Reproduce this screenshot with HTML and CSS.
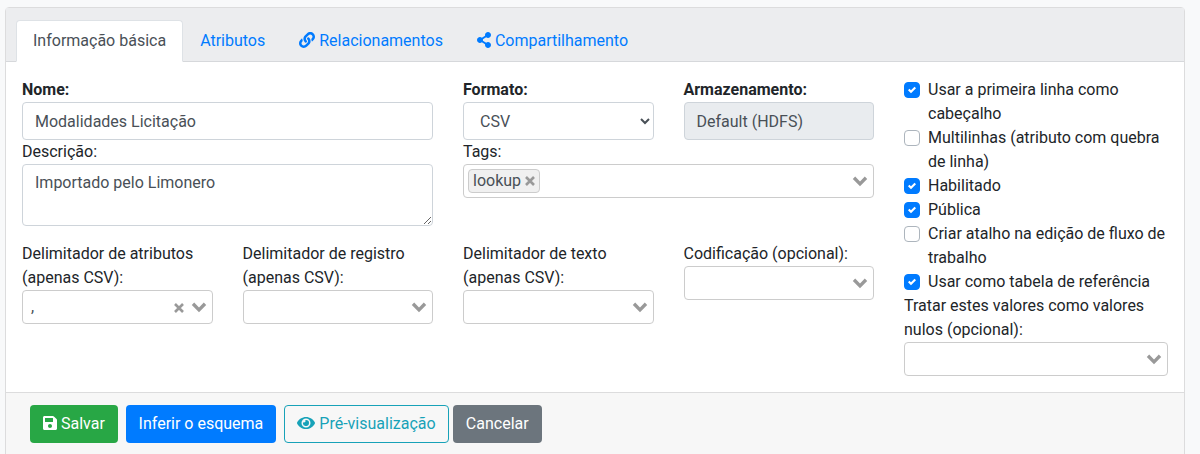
FILE: index.html
```html
<!DOCTYPE html>
<html lang="pt">
<head>
<meta charset="utf-8">
<title>Fonte de dados</title>
<link rel="stylesheet" href="styles.css">
</head>
<body>
<svg class="defs" width="0" height="0" aria-hidden="true">
  <symbol id="chev" viewBox="0 0 20 20"><polygon fill="currentColor" points="2.8,8 5.2,5.6 10,10.4 14.8,5.6 17.2,8 10,15.2"/></symbol>
  <symbol id="times" viewBox="0 0 10 10"><path d="M1 1 9 9M9 1 1 9" fill="none" stroke="currentColor" stroke-width="2.6"/></symbol>
  <symbol id="check" viewBox="0 0 8 8"><path fill="#fff" d="M6.564.75l-3.59 3.612-1.538-1.55L0 4.26l2.974 2.99L8 2.193z"/></symbol>
</svg>
<form class="card">
  <div class="card-header">
    <ul class="tabs">
      <li class="tab active">Informação básica</li>
      <li class="tab">Atributos</li>
      <li class="tab"><svg class="ico" viewBox="0 0 512 512"><path fill="currentColor" d="M326.612 185.391c59.747 59.809 58.927 155.698.36 214.59-.11.12-.24.25-.36.37l-67.2 67.2c-59.27 59.27-155.699 59.262-214.96 0-59.27-59.26-59.27-155.7 0-214.96l37.106-37.106c9.84-9.84 26.786-3.3 27.294 10.606.648 17.722 3.826 35.527 9.69 52.721 1.986 5.822.567 12.262-3.783 16.612l-13.087 13.087c-28.026 28.026-28.905 73.66-1.155 101.96 28.024 28.579 74.086 28.749 102.325.51l67.2-67.19c28.191-28.191 28.073-73.757 0-101.83-3.701-3.694-7.429-6.564-10.341-8.569a16.037 16.037 0 0 1-6.947-12.606c-.396-10.567 3.348-21.456 11.698-29.806l21.054-21.055c5.521-5.521 14.182-6.199 20.584-1.731a152.482 152.482 0 0 1 20.522 17.197zM467.547 44.449c-59.261-59.262-155.69-59.27-214.96 0l-67.2 67.2c-.12.12-.25.25-.36.37-58.566 58.892-59.387 154.781.36 214.59a152.454 152.454 0 0 0 20.521 17.196c6.402 4.468 15.064 3.789 20.584-1.731l21.054-21.055c8.35-8.35 12.094-19.239 11.698-29.806a16.037 16.037 0 0 0-6.947-12.606c-2.912-2.005-6.64-4.875-10.341-8.569-28.073-28.073-28.191-73.639 0-101.83l67.2-67.19c28.239-28.239 74.3-28.069 102.325.51 27.75 28.3 26.872 73.934-1.155 101.96l-13.087 13.087c-4.35 4.35-5.769 10.79-3.783 16.612 5.864 17.194 9.042 34.999 9.69 52.721.509 13.906 17.454 20.446 27.294 10.606l37.106-37.106c59.271-59.259 59.271-155.699.001-214.959z"/></svg> Relacionamentos</li>
      <li class="tab"><svg class="ico ico-share" viewBox="0 0 448 512"><path fill="currentColor" d="M352 320c-22.608 0-43.387 7.819-59.79 20.895l-102.486-64.054a96.551 96.551 0 0 0 0-41.683l102.486-64.054C308.613 184.181 329.392 192 352 192c53.019 0 96-42.981 96-96S405.019 0 352 0s-96 42.981-96 96c0 7.158.79 14.13 2.276 20.841L155.79 180.895C139.387 167.819 118.608 160 96 160c-53.019 0-96 42.981-96 96s42.981 96 96 96c22.608 0 43.387-7.819 59.79-20.895l102.486 64.054A96.301 96.301 0 0 0 256 416c0 53.019 42.981 96 96 96s96-42.981 96-96-42.981-96-96-96z"/></svg> Compartilhamento</li>
    </ul>
  </div>

  <div class="card-body">
    <div class="main-fields">
      <div class="field half">
        <label class="bold">Nome:</label>
        <input class="control" type="text" value="Modalidades Licitação">
      </div>
      <div class="field">
        <label class="bold">Formato:</label>
        <select class="control select-native"><option>CSV</option></select>
      </div>
      <div class="field">
        <label class="bold">Armazenamento:</label>
        <input class="control" type="text" value="Default (HDFS)" disabled>
      </div>
      <div class="field half">
        <label>Descrição:</label>
        <textarea class="control area">Importado pelo Limonero</textarea>
      </div>
      <div class="field half">
        <label>Tags:</label>
        <div class="multi tags">
          <span class="tag">lookup<svg class="tag-x"><use href="#times"/></svg></span>
          <svg class="chev"><use href="#chev"/></svg>
        </div>
      </div>
      <div class="field delim">
        <label>Delimitador de atributos (apenas CSV):</label>
        <div class="multi">
          <span class="single">,</span>
          <svg class="clear"><use href="#times"/></svg>
          <svg class="chev"><use href="#chev"/></svg>
        </div>
      </div>
      <div class="field delim">
        <label>Delimitador de registro (apenas CSV):</label>
        <div class="multi"><svg class="chev"><use href="#chev"/></svg></div>
      </div>
      <div class="field delim">
        <label>Delimitador de texto (apenas CSV):</label>
        <div class="multi"><svg class="chev"><use href="#chev"/></svg></div>
      </div>
      <div class="field delim">
        <label>Codificação (opcional):</label>
        <div class="multi"><svg class="chev"><use href="#chev"/></svg></div>
      </div>
    </div>

    <div class="side">
      <div class="check"><span class="box on"><svg viewBox="0 0 8 8"><use href="#check"/></svg></span>Usar a primeira linha como cabeçalho</div>
      <div class="check"><span class="box"></span>Multilinhas (atributo com quebra de linha)</div>
      <div class="check"><span class="box on"><svg viewBox="0 0 8 8"><use href="#check"/></svg></span>Habilitado</div>
      <div class="check"><span class="box on"><svg viewBox="0 0 8 8"><use href="#check"/></svg></span>Pública</div>
      <div class="check"><span class="box"></span>Criar atalho na edição de fluxo de trabalho</div>
      <div class="check"><span class="box on"><svg viewBox="0 0 8 8"><use href="#check"/></svg></span>Usar como tabela de referência</div>
      <label>Tratar estes valores como valores nulos (opcional):</label>
      <div class="multi"><svg class="chev"><use href="#chev"/></svg></div>
    </div>
  </div>

  <div class="card-footer">
    <button type="button" class="btn green"><svg class="ico ico-save" viewBox="0 0 448 512"><path fill="currentColor" d="M433.941 129.941l-83.882-83.882A48 48 0 0 0 316.118 32H48C21.49 32 0 53.49 0 80v352c0 26.51 21.49 48 48 48h352c26.51 0 48-21.49 48-48V163.882a48 48 0 0 0-14.059-33.941zM224 416c-35.346 0-64-28.654-64-64 0-35.346 28.654-64 64-64s64 28.654 64 64c0 35.346-28.654 64-64 64zm96-304.52V212c0 6.627-5.373 12-12 12H76c-6.627 0-12-5.373-12-12V108c0-6.627 5.373-12 12-12h228.52c3.183 0 6.235 1.264 8.485 3.515l3.48 3.48A11.996 11.996 0 0 1 320 111.48z"/></svg> Salvar</button>
    <button type="button" class="btn blue">Inferir o esquema</button>
    <button type="button" class="btn outline"><svg class="ico ico-eye" viewBox="0 0 576 512"><path fill="currentColor" d="M572.52 241.4C518.29 135.59 410.93 64 288 64S57.68 135.64 3.48 241.41a32.35 32.35 0 0 0 0 29.19C57.71 376.41 165.07 448 288 448s230.32-71.64 284.52-177.41a32.35 32.35 0 0 0 0-29.19zM288 400a144 144 0 1 1 144-144 143.93 143.93 0 0 1-144 144zm0-240a95.31 95.31 0 0 0-25.31 3.79 47.85 47.85 0 0 1-66.9 66.9A95.78 95.78 0 1 0 288 160z"/></svg> Pré-visualização</button>
    <button type="button" class="btn gray">Cancelar</button>
  </div>
</form>
</body>
</html>
```

FILE: styles.css
```css
* { box-sizing: border-box; }

html, body { height: 100%; overflow: hidden; }

body {
  margin: 0;
  padding: 7px 15px 0 5px;
  background: #f8f9fa;
  color: #212529;
  font: 400 16px/24px Roboto, "Liberation Sans", sans-serif;
}

.defs { display: block; height: 0; }

.card {
  background: #fff;
  border: 1px solid #dcdcdd;
  border-radius: 4px 4px 0 0;
}

.card-header {
  background: #ecedef;
  border-bottom: 1px solid #d6d8db;
  padding: 12px 10px 0;
  height: 54px;
}

.tabs {
  display: flex;
  list-style: none;
  margin: 0;
  padding: 0;
}

.tab {
  padding: 8px 16px;
  border: 1px solid transparent;
  border-radius: 4px 4px 0 0;
  color: #007bff;
  height: 42px;
}

.tab.active {
  background: #fff;
  color: #495057;
  border-color: #dee2e6 #dee2e6 #fff;
}

.ico { height: 16px; width: 16px; vertical-align: -2px; }
.ico-share { width: 14px; }
.ico-save { width: 14px; }
.ico-eye { width: 18px; }

.card-body {
  display: grid;
  grid-template-columns: 852px 264px;
  column-gap: 30px;
  padding: 16px;
}

.main-fields {
  display: grid;
  grid-template-columns: repeat(4, 1fr);
  column-gap: 30px;
  align-content: start;
}

.field { min-width: 0; }
.half { grid-column: span 2; }
.delim { margin-top: 16px; }

label { display: block; }
.bold { font-weight: 700; }

.control {
  display: block;
  width: 100%;
  height: 38px;
  padding: 6px 12px;
  border: 1px solid #ced4da;
  border-radius: 4px;
  background: #fff;
  color: #495057;
  font: inherit;
}

.control:disabled { background: #e9ecef; opacity: 1; }

.area { height: 62px; resize: vertical; }

.multi {
  position: relative;
  height: 34px;
  display: flex;
  align-items: center;
  border: 1px solid #ccc;
  border-radius: 4px;
  background: #fff;
}

.tags { padding-left: 4px; }

.tag {
  display: inline-flex;
  align-items: center;
  height: 24px;
  padding: 0 4px;
  background: #f0f0f0;
  border: 1px solid #ccc;
  border-radius: 4px;
  color: #495057;
  line-height: 22px;
}

.tag-x { width: 10px; height: 10px; margin-left: 4px; color: #999; }

.single { padding-left: 8px; color: #495057; }

.chev {
  position: absolute;
  right: 3px;
  top: 6px;
  width: 20px;
  height: 20px;
  color: #999;
}

.clear {
  position: absolute;
  right: 28px;
  top: 12px;
  width: 10px;
  height: 10px;
  color: #999;
}

.check { position: relative; padding-left: 24px; }

.box {
  position: absolute;
  left: 0;
  top: 4px;
  width: 16px;
  height: 16px;
  border: 1px solid #adb5bd;
  border-radius: 4px;
  background: #fff;
  display: flex;
  align-items: center;
  justify-content: center;
}

.box.on { background: #007bff; border-color: #007bff; }
.box svg { width: 8px; height: 8px; }

.card-footer {
  display: flex;
  background: #f7f7f7;
  border-top: 1px solid #dcdcdd;
  padding: 12px 24px;
}

.btn {
  height: 38px;
  padding: 6px 12px;
  border: 1px solid transparent;
  border-radius: 4px;
  color: #fff;
  font: inherit;
  margin-right: 8px;
}

.green { background: #28a745; }
.blue { background: #007bff; padding: 6px 11.75px; }
.outline { background: transparent; border-color: #17a2b8; color: #17a2b8; margin-right: 4px; padding: 6px 12.3px; }
.gray { background: #6c757d; margin-right: 0; padding: 6px 11.9px; }
```
